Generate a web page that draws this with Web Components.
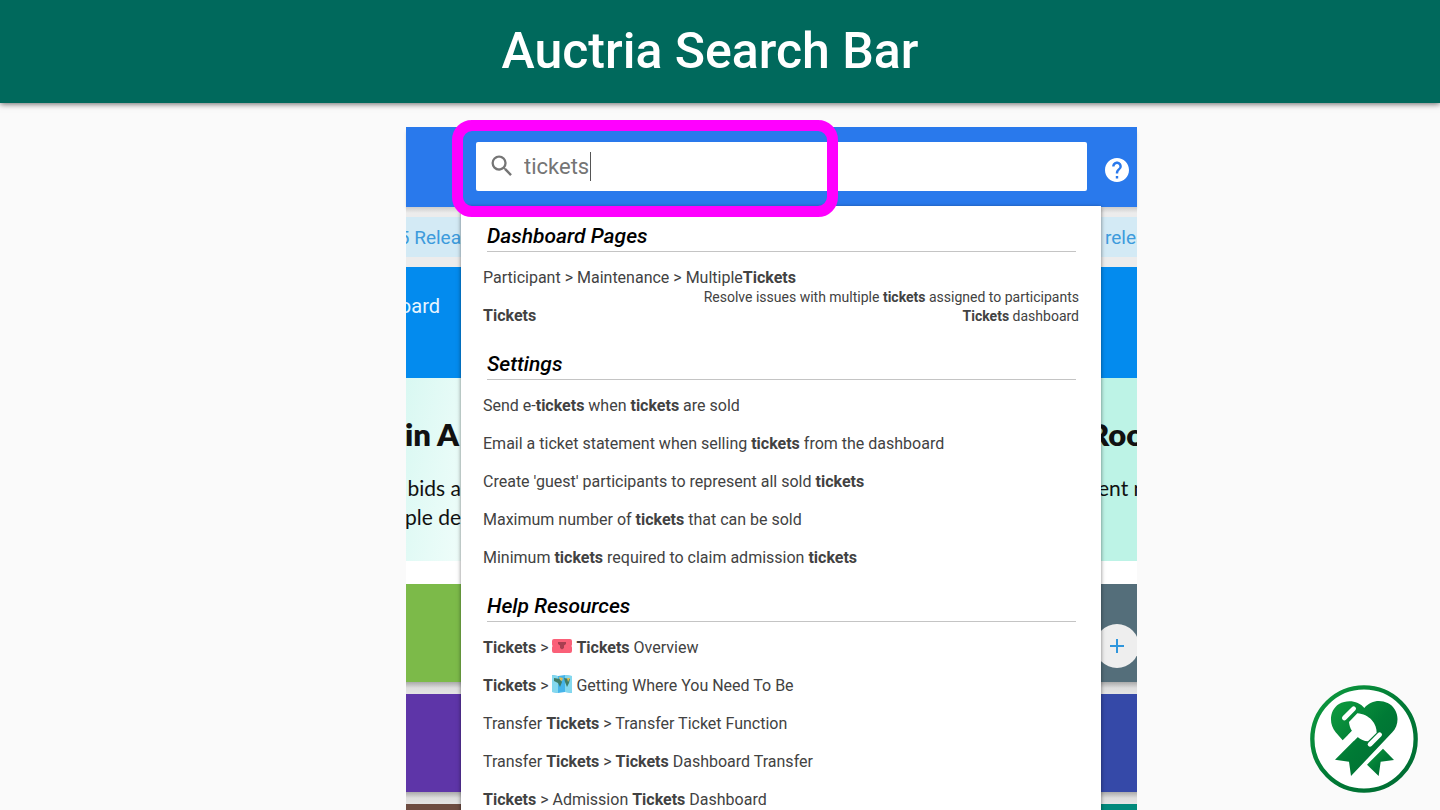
<!DOCTYPE html>
<html lang="en">
<head>
<meta charset="utf-8">
<title>Auctria Search Bar</title>
<style>
  body { margin: 0; background: #fafafa; font-family: Roboto, "Liberation Sans", sans-serif; }
</style>
</head>
<body>
<auctria-slide heading="Auctria Search Bar">
  <dashboard-capture>
    <search-section heading="Dashboard Pages">
      <search-result>Participant &gt; Maintenance &gt; Multiple<b>Tickets</b><span slot="note">Resolve issues with multiple <b>tickets</b> assigned to participants</span></search-result>
      <search-result><b>Tickets</b><span slot="note"><b>Tickets</b> dashboard</span></search-result>
    </search-section>
    <search-section heading="Settings">
      <search-result>Send e-<b>tickets</b> when <b>tickets</b> are sold</search-result>
      <search-result>Email a ticket statement when selling <b>tickets</b> from the dashboard</search-result>
      <search-result>Create 'guest' participants to represent all sold <b>tickets</b></search-result>
      <search-result>Maximum number of <b>tickets</b> that can be sold</search-result>
      <search-result>Minimum <b>tickets</b> required to claim admission <b>tickets</b></search-result>
    </search-section>
    <search-section heading="Help Resources">
      <search-result><b>Tickets</b> &gt; <emoji-icon name="ticket"></emoji-icon> <b>Tickets</b> Overview</search-result>
      <search-result><b>Tickets</b> &gt; <emoji-icon name="map"></emoji-icon> Getting Where You Need To Be</search-result>
      <search-result>Transfer <b>Tickets</b> &gt; Transfer Ticket Function</search-result>
      <search-result>Transfer <b>Tickets</b> &gt; <b>Tickets</b> Dashboard Transfer</search-result>
      <search-result><b>Tickets</b> &gt; Admission <b>Tickets</b> Dashboard</search-result>
    </search-section>
  </dashboard-capture>
</auctria-slide>

<script>
const define = (name, render) => customElements.define(name, class extends HTMLElement {
  constructor() {
    super();
    this.attachShadow({ mode: 'open' });
  }
  connectedCallback() {
    this.shadowRoot.innerHTML = render(this);
  }
});

define('auctria-slide', el => `
  <style>
    :host { display: flex; flex-direction: column; height: 100vh; overflow: hidden; position: relative; }
    header { flex: none; background: #00695c; color: #fff; box-shadow: 0 1px 6px rgba(0,0,0,.6); padding: 19px 20px 20px 0; text-align: center; }
    h1 { margin: 0; font-size: 50px; line-height: 64px; font-weight: 500; }
    main { display: grid; grid-template-columns: 406fr 731fr 303fr; padding-top: 24px; }
    slot { display: block; grid-column: 2; min-width: 0; }
    auctria-logo { position: absolute; right: 22px; bottom: 17px; }
  </style>
  <header><h1>${el.getAttribute('heading')}</h1></header>
  <main><slot></slot></main>
  <auctria-logo></auctria-logo>`);

define('auctria-logo', () => `
  <style>:host { display: block; } svg { display: block; }</style>
  <svg width="108" height="108" viewBox="29 30 324 324" role="img" aria-label="Auctria">
    <defs><linearGradient id="g" x1="0" y1="0" x2="1" y2="1">
      <stop offset="0" stop-color="#0f9d3f"/><stop offset=".5" stop-color="#007a35"/><stop offset="1" stop-color="#006b33"/>
    </linearGradient></defs>
    <circle cx="191" cy="192" r="155" fill="#fff" stroke="url(#g)" stroke-width="13"/>
    <path fill="url(#g)" d="M192 99C210 76 240 73 262 84C294 99 302 144 276 172L152 303L146 260L104 254L172 186L160 163L127 196L106 172C84 146 88 104 116 87C140 73 174 76 192 99Z"/>
    <path fill="url(#g)" d="M200 269L248 221L281 255L241 260L235 303Z"/>
    <path fill="#fff" d="M146 141L171 115C188 116 204 124 214 135C225 147 229 160 229 173L203 199C191 198 181 194 172 186L160 198L143 181L155 168C149 159 147 150 146 141Z"/>
    <path stroke="#fff" stroke-width="14" stroke-linecap="round" d="M132 129L160 101M209 208L238 179"/>
  </svg>`);

define('dashboard-capture', () => `
  <style>
    :host { display: block; position: relative; background: #fff; }
    .body { display: grid; grid-template-columns: 55px minmax(0, 1fr) 36px; }
    .panel { position: relative; margin-top: -1px; background: #fff; box-shadow: 0 1px 4px rgba(0,0,0,.5); padding: 1px 0 24px; }
    .mark { position: absolute; left: 46px; top: -7px; box-sizing: border-box; width: 386px; height: 97px; border: 11px solid #f0f; border-radius: 20px; pointer-events: none; }
  </style>
  <app-bar></app-bar>
  <div class="body">
    <page-edge side="left" notice="5 Relea" tab="board" heading="in A" line1="bids a" line2="ple de"></page-edge>
    <div class="panel"><slot></slot></div>
    <page-edge side="right" notice="relea" heading="Roo" line1="ent n"></page-edge>
  </div>
  <div class="mark"></div>`);

define('app-bar', () => `
  <style>
    :host { display: flex; align-items: center; height: 80px; box-sizing: border-box; padding: 0 8px 2px 70px; gap: 18px; background: #2979ec; box-shadow: 0 3px 4px -2px rgba(0,0,0,.4); }
    label { flex: 1; display: flex; align-items: center; height: 49px; background: #fff; border-radius: 2px; padding-left: 12px; }
    label svg { margin-right: 8px; fill: #757575; }
    input { field-sizing: content; border: 0; padding: 2px 1px 0 0; margin: 0; outline: 0; background: none; font: 22px/30px Roboto, sans-serif; color: #757575; }
    i { width: 1px; height: 29px; background: #555; }
    button { border: 0; padding: 0; margin-top: 7px; background: none; width: 24px; height: 24px; }
    button svg { display: block; }
  </style>
  <label>
    <svg width="28" height="28" viewBox="0 0 24 24" aria-hidden="true"><path d="M15.5 14h-.79l-.28-.27A6.471 6.471 0 0 0 16 9.500 6.500 6.500 0 1 0 9.500 16c1.610 0 3.090-.59 4.230-1.570l.27.28v.79l5 4.990L20.490 19l-4.990-5zm-6 0C7.010 14 5 11.990 5 9.500S7.010 5 9.500 5 14 7.010 14 9.500 11.990 14 9.500 14z"/></svg>
    <input type="text" value="tickets" size="6" aria-label="Search"><i></i>
  </label>
  <button type="button" aria-label="Help">
    <svg width="24" height="24" viewBox="2 2 20 20" fill="#fff"><path d="M12 2C6.480 2 2 6.480 2 12s4.480 10 10 10 10-4.480 10-10S17.520 2 12 2zm1 17h-2v-2h2v2zm2.070-7.750l-.9.920C13.450 12.900 13 13.500 13 15h-2v-.5c0-1.100.45-2.100 1.170-2.830l1.240-1.260c.37-.36.59-.86.59-1.410 0-1.100-.9-2-2-2s-2 .9-2 2H8c0-2.210 1.790-4 4-4s4 1.790 4 4c0 .88-.36 1.680-.93 2.250z"/></svg>
  </button>`);

define('page-edge', el => {
  const right = el.getAttribute('side') === 'right';
  const text = name => el.getAttribute(name) || '';
  return `
  <style>
    :host { display: flex; flex-direction: column; overflow: hidden; white-space: nowrap; }
    div { display: flex; flex-direction: column; flex: none; align-items: ${right ? 'flex-start' : 'flex-end'}; overflow: hidden; }
    .top { background: linear-gradient(#ccc, #ececec 6px); padding: 10px 0; }
    .notice { align-self: stretch; height: 40px; line-height: 41px; background: #d3eaf5; color: #3d9bdc; font-size: 19px; padding-left: ${right ? 4 : 0}px; }
    .tab { height: 111px; box-sizing: border-box; padding: 24px 21px 0 0; background: #038bee; color: #e8f5ff; font-size: 20px; line-height: 30px; }
    .promo { height: 183px; box-sizing: border-box; padding-top: 37px; background: ${right ? '#bdf3e6' : 'linear-gradient(100deg, #d9f8f2, #effdfa)'}; color: #111; font-family: Lato, sans-serif; font-size: 21px; line-height: 29px; }
    h2 { margin: 0 ${right ? 0 : 2}px 20px ${right ? -12 : 0}px; font-size: 31px; line-height: 38px; font-weight: 800; }
    p { margin: 0 0 0 ${right ? -3 : 0}px; }
    .space { height: 23px; background: #fff; }
    .tile { height: 98px; }
    .gap { height: 12px; background: linear-gradient(#aaa, #ddd 50%, #e4e4e4); }
    .one { background: ${right ? '#546e7a' : '#7cba49'}; }
    .two { background: ${right ? '#3549a8' : '#5e35a8'}; }
    .three { background: ${right ? '#00897b' : '#6d4c41'}; }
    button { border: 0; padding: 0; width: 44px; height: 44px; margin: 40px 0 0 -6px; border-radius: 50%; background: #eee; }
    svg { display: block; margin: auto; }
  </style>
  <div class="top"><div class="notice">${text('notice')}</div></div>
  <div class="tab">${text('tab')}</div>
  <div class="promo"><h2>${text('heading')}</h2><p>${text('line1')}</p><p>${text('line2')}</p></div>
  <div class="space"></div>
  <div class="tile one">${right ? '<button type="button" aria-label="Add"><svg width="14" height="14" viewBox="0 0 14 14"><path d="M7 0V14M0 7H14" stroke="#2f96dc" stroke-width="2"/></svg></button>' : ''}</div>
  <div class="gap"></div>
  <div class="tile two"></div>
  <div class="gap"></div>
  <div class="tile three"></div>`;
});

define('search-section', el => `
  <style>
    :host { display: block; }
    h2 { margin: 0 25px 7px 26px; padding: 16px 0 2px; border-bottom: 1px solid #c4c4c4; color: #000; font-size: 21px; line-height: 26px; font-weight: 500; font-style: italic; }
  </style>
  <h2>${el.getAttribute('heading')}</h2>
  <slot></slot>`);

define('search-result', () => `
  <style>
    :host { display: block; height: 38px; }
    a { display: flex; flex-wrap: wrap; justify-content: space-between; align-items: center; padding: 0 22px; color: #424242; text-decoration: none; font-size: 16px; line-height: 38px; }
    .note { margin: -9px 0 -9px auto; font-size: 14px; line-height: 18px; }
  </style>
  <a href="#"><span><slot></slot></span><span class="note"><slot name="note"></slot></span></a>`);

define('emoji-icon', el => `
  <style>:host { display: inline-block; vertical-align: -3px; } svg { display: block; }</style>
  ${el.getAttribute('name') === 'ticket' ? `
  <svg width="20" height="20" viewBox="0 0 20 20" aria-hidden="true">
    <path fill="#fa6078" d="M2 3H18Q20 3 20 5V8.500Q19 10 20 11.500V15Q20 17 18 17H2Q0 17 0 15V11.500Q1 10 0 8.500V5Q0 3 2 3Z"/>
    <path fill="#a83e50" d="M6 6H14V8L12 9.500V12L10 13.500L8 12V9.500L6 8Z"/>
  </svg>` : `
  <svg width="20" height="20" viewBox="0 0 20 20" aria-hidden="true">
    <path fill="#45b4ea" d="M0 1L6 2L13 1L20 2V19L13 18L6 19L0 18Z"/>
    <path fill="#84d8ee" d="M0 1L6 2V19L0 18ZM13 1L20 2V19L13 18Z"/>
    <path fill="#3f7d68" d="M2 4L8 5L10 8L8 13L6 9L2 7ZM12 4L18 5L17 9L15 13L13 8Z"/>
    <path fill="#dfbd54" d="M7 3L11 4L10 7L8 6ZM15 4L18 4L16 8Z"/>
  </svg>`}`);
</script>
</body>
</html>
